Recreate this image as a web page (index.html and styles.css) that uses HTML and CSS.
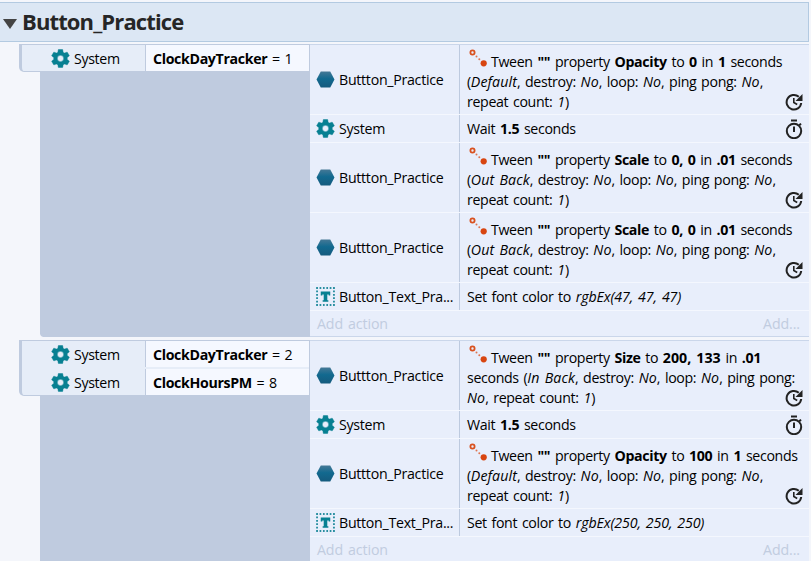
FILE: index.html
```
<!DOCTYPE html>
<html lang="en">
<head>
<meta charset="utf-8">
<title>Button_Practice</title>
<link rel="stylesheet" href="styles.css">
</head>
<body>
<svg class="defs" width="0" height="0" aria-hidden="true">
  <defs>
    <linearGradient id="hexfill" x1="0" y1="0" x2="0" y2="1"><stop offset="0" stop-color="#447896"/><stop offset=".45" stop-color="#12698f"/><stop offset="1" stop-color="#155b7e"/></linearGradient>
    <symbol id="gear" viewBox="1.5 1.5 21 21"><path fill="#078092" stroke="#078092" stroke-width=".5" d="M19.43 12.98c.04-.32.07-.64.07-.98s-.03-.66-.07-.98l2.11-1.65c.19-.15.24-.42.12-.64l-2-3.46c-.12-.22-.39-.3-.61-.22l-2.49 1c-.52-.4-1.08-.73-1.69-.98l-.38-2.65C14.46 2.18 14.25 2 14 2h-4c-.25 0-.46.18-.49.42l-.38 2.65c-.61.25-1.17.59-1.69.98l-2.49-1c-.23-.09-.49 0-.61.22l-2 3.46c-.13.22-.07.49.12.64l2.11 1.65c-.04.32-.07.65-.07.98s.03.66.07.98l-2.11 1.65c-.19.15-.24.42-.12.64l2 3.46c.12.22.39.3.61.22l2.49-1c.52.4 1.08.73 1.69.98l.38 2.65c.03.24.24.42.49.42h4c.25 0 .46-.18.49-.42l.38-2.65c.61-.25 1.17-.59 1.69-.98l2.49 1c.23.09.49 0 .61-.22l2-3.46c.12-.22.07-.49-.12-.64zM12 15.5a3.5 3.5 0 1 1 0-7 3.5 3.5 0 0 1 0 7z"/></symbol>
    <symbol id="hex" viewBox="0 0 18 18"><path fill="url(#hexfill)" d="M4.500 1.500h9L17.500 9l-4 7.500h-9L.5 9z"/></symbol>
    <symbol id="text" viewBox="0 0 18 18"><path fill="none" stroke="#2a8fa1" stroke-width="1.800" stroke-dasharray="1.600 1.600" d="M.2 1h17.600M.2 17h17.600M1 .2v17.600M17 .2v17.600"/><path fill="#078092" d="M4.500 4.300h9V8H12V7h-1.300v5.500h1V14H6.300v-1.500h1V7H6v1H4.500z"/></symbol>
    <symbol id="tween" viewBox="0 0 18 18"><circle cx="3.500" cy="3.500" r="2.100" fill="none" stroke="#d9511f" stroke-width="1.800"/><circle cx="14.700" cy="14.300" r="3.100" fill="#d84510"/><circle cx="7.500" cy="7.500" r="1" fill="#df7550"/><circle cx="10.300" cy="10.200" r="1" fill="#df7550"/></symbol>
    <symbol id="repeat" viewBox="0 0 18 18"><path fill="none" stroke="#222" stroke-width="2" d="M13.800 3.800A7.300 7.300 0 1 0 16.200 10"/><path fill="#222" d="M17.500 1v7H10.500z"/><path fill="none" stroke="#222" stroke-width="1.600" d="M8.800 5v4.500l3.400 2"/></symbol>
    <symbol id="timer" viewBox="0 0 18 20"><circle cx="9" cy="12" r="7.200" fill="none" stroke="#222" stroke-width="2"/><path fill="none" stroke="#222" stroke-width="2" d="M6 1.500h6M9 7.500v5.500M14.300 6.300l1.700-1.700"/></symbol>
  </defs>
</svg>
<header class="group"><svg class="arrow" viewBox="0 0 14 10"><path d="M0 0h14L7 10z"/></svg><h1>Button_Practice</h1></header>

<section class="event first">
  <div class="side">
    <div class="conditions">
      <div class="cond"><div class="cobj"><svg class="ico"><use href="#gear"/></svg><span>System</span></div><div class="ctext"><b>ClockDayTracker</b> = 1</div></div>
    </div>
  </div>
  <div class="actions">
    <div class="row tall"><div class="obj"><svg class="ico"><use href="#hex"/></svg><span>Buttton_Practice</span></div><div class="act"><p><svg class="tween"><use href="#tween"/></svg>Tween <b>""</b> property <b>Opacity</b> to <b>0</b> in <b>1</b> seconds</p><p>(<i>Default</i>, destroy: <i>No</i>, loop: <i>No</i>, ping pong: <i>No</i>,</p><p>repeat count: <i>1</i>)</p></div><svg class="state"><use href="#repeat"/></svg></div>
    <div class="row"><div class="obj"><svg class="ico"><use href="#gear"/></svg><span>System</span></div><div class="act"><p>Wait <b>1.5</b> seconds</p></div><svg class="state clock"><use href="#timer"/></svg></div>
    <div class="row tall"><div class="obj"><svg class="ico"><use href="#hex"/></svg><span>Buttton_Practice</span></div><div class="act"><p><svg class="tween"><use href="#tween"/></svg>Tween <b>""</b> property <b>Scale</b> to <b>0, 0</b> in <b>.01</b> seconds</p><p>(<i>Out Back</i>, destroy: <i>No</i>, loop: <i>No</i>, ping pong: <i>No</i>,</p><p>repeat count: <i>1</i>)</p></div><svg class="state"><use href="#repeat"/></svg></div>
    <div class="row tall"><div class="obj"><svg class="ico"><use href="#hex"/></svg><span>Buttton_Practice</span></div><div class="act"><p><svg class="tween"><use href="#tween"/></svg>Tween <b>""</b> property <b>Scale</b> to <b>0, 0</b> in <b>.01</b> seconds</p><p>(<i>Out Back</i>, destroy: <i>No</i>, loop: <i>No</i>, ping pong: <i>No</i>,</p><p>repeat count: <i>1</i>)</p></div><svg class="state"><use href="#repeat"/></svg></div>
    <div class="row"><div class="obj"><svg class="ico"><use href="#text"/></svg><span>Button_Text_Pra...</span></div><div class="act"><p>Set font color to <i class="fn">rgbEx(47, 47, 47)</i></p></div></div>
    <div class="add"><span>Add action</span><span>Add...</span></div>
  </div>
</section>

<section class="event second">
  <div class="side">
    <div class="conditions">
      <div class="cond"><div class="cobj"><svg class="ico"><use href="#gear"/></svg><span>System</span></div><div class="ctext"><b>ClockDayTracker</b> = 2</div></div>
      <div class="cond"><div class="cobj"><svg class="ico"><use href="#gear"/></svg><span>System</span></div><div class="ctext"><b>ClockHoursPM</b> = 8</div></div>
    </div>
  </div>
  <div class="actions">
    <div class="row tall"><div class="obj"><svg class="ico"><use href="#hex"/></svg><span>Buttton_Practice</span></div><div class="act"><p><svg class="tween"><use href="#tween"/></svg>Tween <b>""</b> property <b>Size</b> to <b class="wide">200, 133</b> in <b>.01</b></p><p>seconds (<i>In Back</i>, destroy: <i>No</i>, loop: <i>No</i>, ping pong:</p><p><i>No</i>, repeat count: <i>1</i>)</p></div><svg class="state"><use href="#repeat"/></svg></div>
    <div class="row"><div class="obj"><svg class="ico"><use href="#gear"/></svg><span>System</span></div><div class="act"><p>Wait <b>1.5</b> seconds</p></div><svg class="state clock"><use href="#timer"/></svg></div>
    <div class="row tall"><div class="obj"><svg class="ico"><use href="#hex"/></svg><span>Buttton_Practice</span></div><div class="act"><p><svg class="tween"><use href="#tween"/></svg>Tween <b>""</b> property <b>Opacity</b> to <b>100</b> in <b>1</b> seconds</p><p>(<i>Default</i>, destroy: <i>No</i>, loop: <i>No</i>, ping pong: <i>No</i>,</p><p>repeat count: <i>1</i>)</p></div><svg class="state"><use href="#repeat"/></svg></div>
    <div class="row"><div class="obj"><svg class="ico"><use href="#text"/></svg><span>Button_Text_Pra...</span></div><div class="act"><p>Set font color to <i class="fn">rgbEx(250, 250, 250)</i></p></div></div>
    <div class="add"><span>Add action</span><span>Add...</span></div>
  </div>
</section>
</body>
</html>
```
FILE: styles.css
```
* { box-sizing: border-box; }
html, body { height: 561px; overflow: hidden; }
body { margin: 0; padding-top: 2px; background: #f4f6fb; color: #000; font: 14.2px/20px "Open Sans", "Noto Sans", sans-serif; letter-spacing: -0.35px; word-spacing: 1.4px; }
p, h1 { margin: 0; }
i { letter-spacing: .1px; }
.fn { letter-spacing: -.12px; }
.wide { letter-spacing: 0; }
svg { display: block; flex: none; }
.defs { position: absolute; }
.group { display: flex; align-items: center; width: 809px; height: 40px; padding-left: 3px; background: #dce7f4; border: 1px solid #b3cae1; border-left: 0; }
.arrow { width: 14px; height: 10px; margin: 3px 5px 0 0; fill: #444; }
h1 { font-size: 22px; line-height: 37px; font-weight: 700; color: #262626; letter-spacing: -0.87px; padding-bottom: 2px; }
.event { display: flex; width: 809px; padding-left: 19px; }
.first { height: 293px; margin-top: 2px; }
.second { height: 221px; margin-top: 3px; }
.side { width: 291px; background: linear-gradient(#bfcbdf, #bfcbdf) 21px 0 / 270px 100% no-repeat; }
.first .side { clip-path: polygon(0 0, 100% 0, 100% 100%, 24px 100%, 22px 292px, 21px 290px, 21px 40px, 0 40px); }
.conditions { width: 290px; border: solid #bfcbdf; border-width: 1px 0 1px 3px; border-radius: 0 0 0 5px; background: #e6edf8; overflow: hidden; }
.cond { display: flex; height: 26px; }
.cond + .cond { height: 28px; padding-top: 2px; }
.cobj { display: flex; align-items: center; gap: 4px; width: 123px; padding: 1px 0 0 29px; }
.ctext { width: 164px; padding: 0 0 0 7px; line-height: 27px; background: #f5f8ff; border-left: 1px solid #bfcbdf; white-space: pre; }
.ico { width: 19px; height: 19px; }
.actions { width: 499px; border-top: 1px solid #cad6ea; background: #e8eefb; }
.row { position: relative; display: flex; height: 28px; border-bottom: 1px solid #f4f7fe; }
.row.tall { height: 70px; }
.obj { display: flex; align-items: center; gap: 4px; width: 150px; padding-left: 6px; border-right: 1px solid #bdcadf; white-space: nowrap; letter-spacing: -.28px; }
.act { flex: 1; padding: 4px 0 0 7px; white-space: nowrap; }
.tall .act { padding-top: 7px; }
.act p { height: 20px; }
.tween { display: inline-block; width: 18px; height: 18px; margin: -4px 4px 0 2px; vertical-align: 0; }
.state { position: absolute; right: 6px; bottom: 3px; width: 18px; height: 18px; }
.state.clock { height: 20px; bottom: 3px; }
.add { display: flex; justify-content: space-between; height: 26px; padding: 3px 9px 0 7px; color: #c1cce0; border-bottom: 1px solid #cad6ea; letter-spacing: -.1px; }
.second .add { height: 24px; border: 0; }
```
